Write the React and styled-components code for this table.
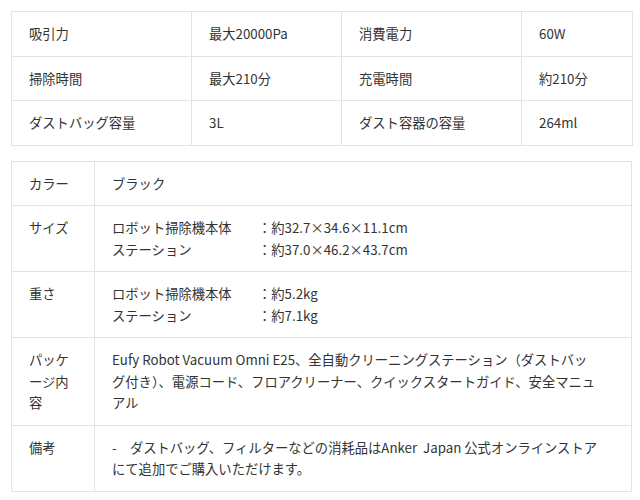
import styled, { createGlobalStyle } from 'styled-components'

const Global = createGlobalStyle`
  body {
    margin: 0;
    background: #fff;
    font-family: "Noto Sans CJK JP", "Noto Sans", sans-serif;
    font-size: 13.3px;
    color: #333;
  }
`

const Page = styled.div`
  padding: 11px 8px 0 11px;
  width: 621px;
`

const Table = styled.table`
  width: 621px;
  border-collapse: collapse;
  table-layout: fixed;
  margin-bottom: 15px;
`

const Cell = styled.td`
  border: 1px solid #e3e3e3;
  padding: 11px 17px;
  line-height: 21.5px;
  vertical-align: top;
  word-break: break-all;
`

const SubGrid = styled.div`
  display: grid;
  grid-template-columns: 146px auto;
`

const specs = [
  ['吸引力', '最大20000Pa', '消費電力', '60W'],
  ['掃除時間', '最大210分', '充電時間', '約210分'],
  ['ダストバッグ容量', '3L', 'ダスト容器の容量', '264ml'],
]

const Pairs = ({ rows }) => (
  <SubGrid>
    {rows.map(([k, v]) => [
      <div key={k}>{k}</div>,
      <div key={k + 'v'}>：{v}</div>,
    ])}
  </SubGrid>
)

export default function App() {
  return (
    <Page>
      <Global />
      <Table>
        <colgroup>
          <col style={{ width: 180 }} />
          <col style={{ width: 150 }} />
          <col style={{ width: 180 }} />
          <col style={{ width: 111 }} />
        </colgroup>
        <tbody>
          {specs.map(row => (
            <tr key={row[0]}>
              {row.map(c => <Cell key={c}>{c}</Cell>)}
            </tr>
          ))}
        </tbody>
      </Table>
      <Table>
        <colgroup>
          <col style={{ width: 83 }} />
          <col />
        </colgroup>
        <tbody>
          <tr>
            <Cell>カラー</Cell>
            <Cell>ブラック</Cell>
          </tr>
          <tr>
            <Cell>サイズ</Cell>
            <Cell>
              <Pairs rows={[
                ['ロボット掃除機本体', '約32.7×34.6×11.1cm'],
                ['ステーション', '約37.0×46.2×43.7cm'],
              ]} />
            </Cell>
          </tr>
          <tr>
            <Cell>重さ</Cell>
            <Cell>
              <Pairs rows={[
                ['ロボット掃除機本体', '約5.2kg'],
                ['ステーション', '約7.1kg'],
              ]} />
            </Cell>
          </tr>
          <tr>
            <Cell>パッケージ内容</Cell>
            <Cell>
              Eufy Robot Vacuum Omni E25、全自動クリーニングステーション（ダストバッ<br />
              グ付き）、電源コード、フロアクリーナー、クイックスタートガイド、安全マニュ<br />
              アル
            </Cell>
          </tr>
          <tr>
            <Cell>備考</Cell>
            <Cell>
              -　ダストバッグ、フィルターなどの消耗品はAnker&nbsp; Japan 公式オンラインストア<br />
              にて追加でご購入いただけます。
            </Cell>
          </tr>
        </tbody>
      </Table>
    </Page>
  )
}
